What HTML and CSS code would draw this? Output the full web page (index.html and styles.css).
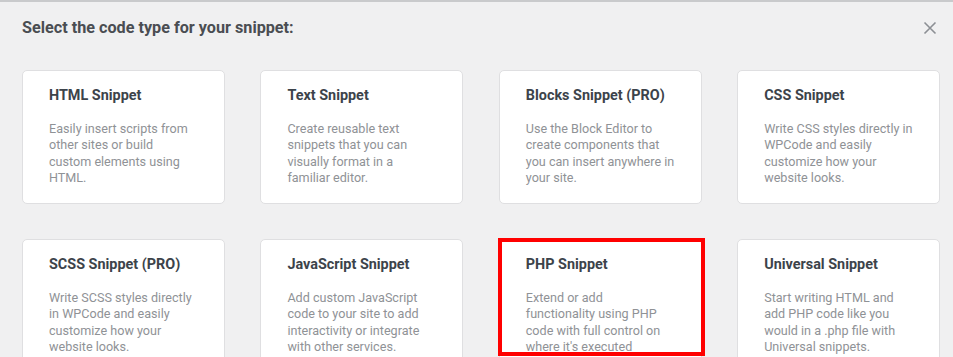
FILE: index.html
```html
<!DOCTYPE html>
<html lang="en">
<head>
    <meta charset="UTF-8">
    <meta name="viewport" content="width=device-width, initial-scale=1.0">
    <title>Select snippet type</title>
    <link rel="stylesheet" href="styles.css">
</head>
<body>
    <div class="modal">
        <!-- Header -->
        <div class="modal-header">
            <h2>Select the code type for your snippet:</h2>
            <button type="button" class="close-btn" aria-label="Close">
                <svg width="14" height="14" viewBox="0 0 14 14">
                    <path d="M1.5 1.5 L12.5 12.5 M12.5 1.5 L1.5 12.5" stroke="#8c8f94" stroke-width="1.6" fill="none"/>
                </svg>
            </button>
        </div>

        <!-- Snippet types -->
        <div class="type-grid">
            <div class="type-card">
                <h3>HTML Snippet</h3>
                <p>Easily insert scripts from<br>other sites or build<br>custom elements using<br>HTML.</p>
            </div>
            <div class="type-card">
                <h3>Text Snippet</h3>
                <p>Create reusable text<br>snippets that you can<br>visually format in a<br>familiar editor.</p>
            </div>
            <div class="type-card">
                <h3>Blocks Snippet (PRO)</h3>
                <p>Use the Block Editor to<br>create components that<br>you can insert anywhere in<br>your site.</p>
            </div>
            <div class="type-card">
                <h3>CSS Snippet</h3>
                <p>Write CSS styles directly in<br>WPCode and easily<br>customize how your<br>website looks.</p>
            </div>
            <div class="type-card">
                <h3>SCSS Snippet (PRO)</h3>
                <p>Write SCSS styles directly<br>in WPCode and easily<br>customize how your<br>website looks.</p>
            </div>
            <div class="type-card">
                <h3>JavaScript Snippet</h3>
                <p>Add custom JavaScript<br>code to your site to add<br>interactivity or integrate<br>with other services.</p>
            </div>
            <div class="type-card selected">
                <h3>PHP Snippet</h3>
                <p>Extend or add<br>functionality using PHP<br>code with full control on<br>where it's executed</p>
                <div class="highlight"></div>
            </div>
            <div class="type-card">
                <h3>Universal Snippet</h3>
                <p>Start writing HTML and<br>add PHP code like you<br>would in a .php file with<br>Universal snippets.</p>
            </div>
        </div>
    </div>
</body>
</html>
```
FILE: styles.css
```css
* {
    margin: 0;
    padding: 0;
    box-sizing: border-box;
    font-family: Roboto, "Liberation Sans", sans-serif;
}

html, body {
    height: 100%;
    overflow: hidden;
}

body {
    background: #f0f0f1;
}

.modal {
    border-top: 2px solid #c9cacc;
    padding: 16px 13px 0 22px;
}

.modal-header {
    display: flex;
    justify-content: space-between;
    align-items: center;
    margin-bottom: 32px;
}

.modal-header h2 {
    font-size: 16.2px;
    line-height: 20px;
    font-weight: 700;
    color: #4a4d52;
}

.close-btn {
    background: none;
    border: none;
    cursor: pointer;
    width: 14px;
    height: 14px;
    margin-right: 3px;
}

.close-btn svg {
    display: block;
}

.type-grid {
    display: grid;
    grid-template-columns: repeat(4, 203px);
    grid-auto-rows: 134px;
    column-gap: 35.4px;
    row-gap: 35px;
}

.type-card {
    position: relative;
    background: #fff;
    border: 1px solid #dfdfe1;
    border-radius: 5px;
    padding: 15px 10px 0 26px;
}

.type-card h3 {
    font-size: 14.4px;
    line-height: 20px;
    font-weight: 700;
    color: #3c434a;
    margin-bottom: 15px;
}

.type-card p {
    font-size: 12.6px;
    line-height: 16.25px;
    color: #8f9296;
    white-space: nowrap;
}

.highlight {
    position: absolute;
    top: -2px;
    left: -2px;
    right: -4px;
    height: 118px;
    border: 4px solid #ff0000;
}
```
